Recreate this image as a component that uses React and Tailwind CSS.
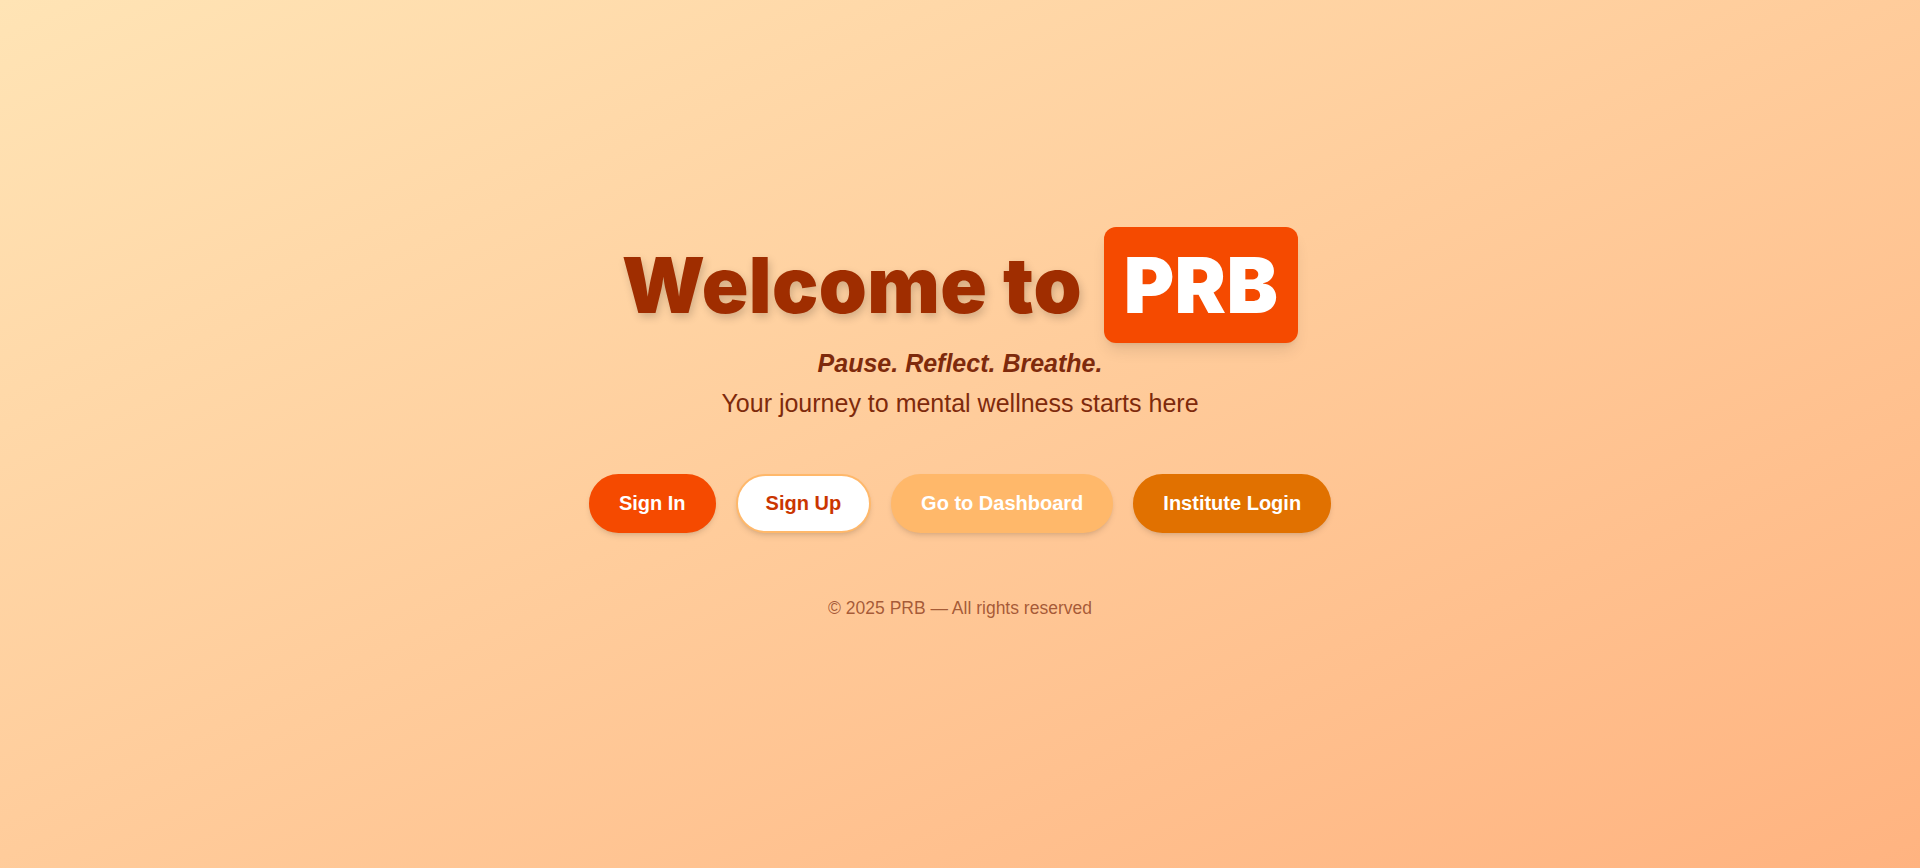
import React from "react";

export default function App() {
  const buttons = [
    { label: "Sign In", cls: "bg-orange-600 border-orange-600 text-white" },
    { label: "Sign Up", cls: "bg-white border-orange-300 text-orange-700" },
    { label: "Go to Dashboard", cls: "bg-orange-300 border-orange-300 text-white" },
    { label: "Institute Login", cls: "bg-amber-600 border-amber-600 text-white" },
  ];

  return (
    <div className="min-h-screen w-full bg-linear-to-br from-[#ffe4b5] to-[#ffb380] flex flex-col items-center justify-center pb-5 font-['Liberation_Sans',Arial,sans-serif]">
      <h1 className="text-[77px] leading-none font-black tracking-[0.005em] font-['Inter',sans-serif] text-orange-800 [text-shadow:2px_4px_8px_rgba(0,0,0,0.18)]">
        Welcome to{" "}
        <span className="ml-1.5 inline-block bg-orange-600 text-white rounded-xl px-5 pt-5 pb-[19px] shadow-lg [text-shadow:none]">
          PRB
        </span>
      </h1>

      <p className="mt-1 text-[25px] leading-8 font-bold italic text-orange-900">
        Pause. Reflect. Breathe.
      </p>
      <p className="mt-2 text-[25px] leading-8 text-orange-900">
        Your journey to mental wellness starts here
      </p>

      <div className="mt-[55px] flex items-center gap-5">
        {buttons.map((b) => (
          <button
            key={b.label}
            className={`rounded-full border-2 px-7 py-[13.5px] text-xl font-bold shadow-md ${b.cls}`}
          >
            {b.label}
          </button>
        ))}
      </div>

      <footer className="mt-[62px] text-[17.5px] text-orange-900/70">
        © 2025 PRB — All rights reserved
      </footer>
    </div>
  );
}
